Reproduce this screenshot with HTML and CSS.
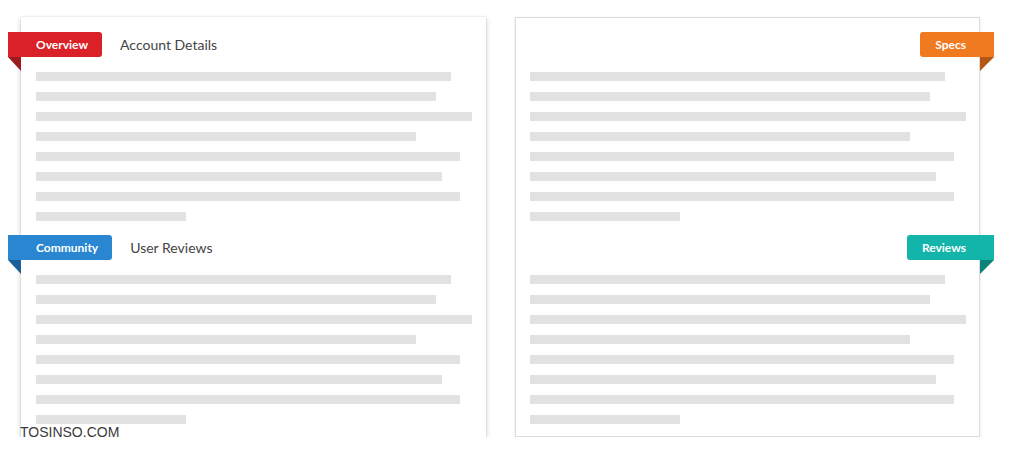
FILE: index.html
```html
<!DOCTYPE html>
<html>
<head>
<meta charset="utf-8">
<link rel="stylesheet" href="styles.css">
</head>
<body>
<div class="page">
  <div class="card card-left">
    <section class="sec">
      <div class="head">
        <span class="ribbon ribbon-l red">Overview</span>
        <span class="title">Account Details</span>
      </div>
      <div class="lines">
        <div class="ln w1"></div><div class="ln w2"></div><div class="ln w3"></div><div class="ln w4"></div>
        <div class="ln w5"></div><div class="ln w6"></div><div class="ln w7"></div><div class="ln w8"></div>
      </div>
    </section>
    <section class="sec">
      <div class="head">
        <span class="ribbon ribbon-l blue">Community</span>
        <span class="title">User Reviews</span>
      </div>
      <div class="lines">
        <div class="ln w1"></div><div class="ln w2"></div><div class="ln w3"></div><div class="ln w4"></div>
        <div class="ln w5"></div><div class="ln w6"></div><div class="ln w7"></div><div class="ln w8"></div>
      </div>
    </section>
  </div>
  <div class="card card-right">
    <section class="sec">
      <div class="head head-r">
        <span class="ribbon ribbon-r orange">Specs</span>
      </div>
      <div class="lines">
        <div class="ln w1"></div><div class="ln w2"></div><div class="ln w3"></div><div class="ln w4"></div>
        <div class="ln w5"></div><div class="ln w6"></div><div class="ln w7"></div><div class="ln w8"></div>
      </div>
    </section>
    <section class="sec">
      <div class="head head-r">
        <span class="ribbon ribbon-r teal">Reviews</span>
      </div>
      <div class="lines">
        <div class="ln w1"></div><div class="ln w2"></div><div class="ln w3"></div><div class="ln w4"></div>
        <div class="ln w5"></div><div class="ln w6"></div><div class="ln w7"></div><div class="ln w8"></div>
      </div>
    </section>
  </div>
</div>
<div class="watermark">TOSINSO.COM</div>
</body>
</html>
```

FILE: styles.css
```css
html, body {
  margin: 0;
  padding: 0;
  background: #fff;
  font-family: Lato, "Open Sans", Arial, sans-serif;
}
.page {
  display: flex;
  gap: 29px;
  padding: 17px 0 0 21px;
}
.card {
  box-sizing: border-box;
  width: 465px;
  height: 420px;
  background: #fff;
  padding: 15px 14px 13px 15px;
  display: flex;
  flex-direction: column;
  gap: 14px;
}
.card-left {
  box-shadow: 0 2px 5px rgba(0, 0, 0, 0.22), 0 0 1px rgba(0, 0, 0, 0.2);
}
.card-right {
  border: 1px solid #dcdcdc;
  box-shadow: 0 1px 3px rgba(0, 0, 0, 0.1);
  padding: 14px 13px 12px 14px;
}
.head {
  display: flex;
  align-items: center;
  height: 25px;
  margin-bottom: 15px;
}
.head-r {
  justify-content: flex-end;
}
.ribbon {
  position: relative;
  height: 25px;
  line-height: 25px;
  color: #fff;
  font-size: 12px;
  font-weight: 700;
  box-sizing: border-box;
}
.ribbon::after {
  content: "";
  position: absolute;
  top: 25px;
  width: 0;
  height: 0;
  border-style: solid;
}
.ribbon-l {
  margin-left: -28px;
  padding: 0 14px 0 28px;
  border-radius: 0 3px 3px 0;
}
.ribbon-l::after {
  left: 0;
  border-width: 0 13px 14px 0;
}
.ribbon-r {
  margin-right: -28px;
  padding: 0 28px 0 15px;
  border-radius: 3px 0 0 3px;
}
.ribbon-r::after {
  right: 0;
  border-width: 14px 14px 0 0;
}
.red { background: #db2128; }
.red::after { border-color: transparent #9c1b1f transparent transparent; }
.blue { background: #2a86d0; }
.blue::after { border-color: transparent #1c5f96 transparent transparent; }
.orange { background: #f07a1f; }
.orange::after { border-color: #b45715 transparent transparent transparent; }
.teal { background: #13b4a9; }
.teal::after { border-color: #0c8279 transparent transparent transparent; }
.title {
  margin-left: 18px;
  font-size: 14px;
  color: #444;
}
.lines {
  display: flex;
  flex-direction: column;
  gap: 11px;
}
.ln {
  height: 9px;
  background: #e2e2e2;
}
.w1 { width: 415px; }
.w2 { width: 400px; }
.w3 { width: 436px; }
.w4 { width: 380px; }
.w5 { width: 424px; }
.w6 { width: 406px; }
.w7 { width: 424px; }
.w8 { width: 150px; }
.watermark {
  position: absolute;
  left: 20px;
  top: 424px;
  font-family: "Liberation Sans", Arial, sans-serif;
  font-size: 14px;
  color: #3a3a3a;
  text-shadow: 0 0 2px #fff;
}
```
